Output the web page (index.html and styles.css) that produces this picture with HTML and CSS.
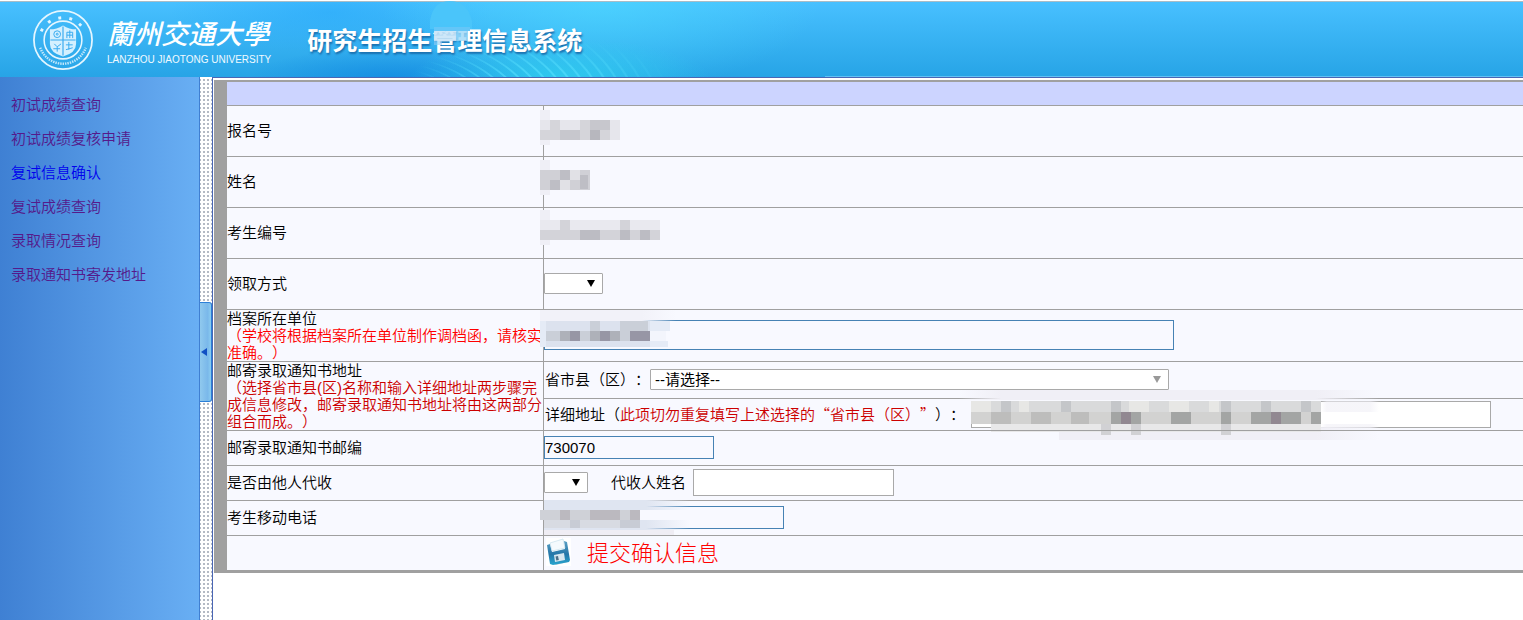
FILE: index.html
```html
<!DOCTYPE html>
<html lang="zh-CN">
<head>
<meta charset="utf-8">
<title>研究生招生管理信息系统</title>
<link rel="stylesheet" href="styles.css">
</head>
<body>
<header class="banner">
  <div class="banner-art">
    <div class="rings"></div>
    <svg class="emblem" viewBox="0 0 64 64" aria-hidden="true">
      <g fill="none" stroke="#e4f6ff">
        <circle cx="32" cy="32" r="30" stroke-width="1.8"/>
        <circle cx="32" cy="32" r="19.5" stroke-width="1.6"/>
        <path d="M9.500 23a25 25 0 0 1 45 0" stroke-width="3" stroke-dasharray="3 8.5"/>
        <path d="M8.500 40a25 25 0 0 0 47 0" stroke-width="2.500" stroke-dasharray="1.500 1" opacity=".8"/>
      </g>
      <path d="M18.500 21q7 0 13.500-4q6.500 4 13.500 4v15q0 9-13.500 13q-13.500-4-13.500-13z" fill="#d4f0ff"/>
      <g stroke="#37aaf0" fill="none">
        <path d="M32 18v30M19 32h26" stroke-width="1.200"/>
        <circle cx="26" cy="26" r="3.500"/>
        <circle cx="26" cy="26" r="1"/>
        <path d="M36 30v-6h6v6M36 27h6M39 22v8"/>
        <path d="M23 36l3 3 4-3M26 39v5M22 41h7"/>
        <path d="M35 37h7M38 34v8M35 42l7-2"/>
      </g>
    </svg>
    <div class="school">
      <span class="school-cn">蘭州交通大學</span>
      <span class="school-en">LANZHOU JIAOTONG UNIVERSITY</span>
    </div>
    <h1 class="system">研究生招生<span class="veiled">管<svg viewBox="0 0 44 44" aria-hidden="true">
      <path d="M2 20q3-20 20-20t22 20v8H2z" fill="#4bc5fa" opacity=".9"/>
      <path d="M6 26h36v4H6z" fill="#64c6f8"/>
      <path d="M6 30h22v10H6z" fill="#c9e4f7" opacity=".9"/>
      <path d="M6 40h8v4H6z" fill="#8fcdf5" opacity=".6"/>
      <path d="M28 30h12v10H28z" fill="#9bd7f7" opacity=".8"/>
    </svg></span>理信息系统</h1>
  </div>
  <div class="banner-fill"></div>
</header>

<div class="frame">
  <nav class="menu">
    <a href="#">初试成绩查询</a>
    <a href="#">初试成绩复核申请</a>
    <a href="#" class="current">复试信息确认</a>
    <a href="#">复试成绩查询</a>
    <a href="#">录取情况查询</a>
    <a href="#">录取通知书寄发地址</a>
  </nav>
  <div class="splitter">
    <button type="button" class="handle" aria-label="收起菜单"></button>
  </div>
  <main class="content">
    <form class="panel">
      <table class="sheet">
        <colgroup><col class="col-label"><col></colgroup>
        <tbody>
        <tr><th colspan="2" class="caption"></th></tr>
        <tr class="tall">
          <td>报名号</td>
          <td><svg class="mosaic mosaic-a" viewBox="0 0 80 40" aria-hidden="true">
            <path fill="#efeff6" d="M0 5h10v35H0z"/>
            <path fill="#d5d5da" d="M0 15h70v20H0z"/>
            <path fill="#e6e6ec" d="M0 15h10v10H0zM20 15h20v10H20zM70 15h10v20H70z"/>
            <path fill="#c7c7cd" d="M50 15h10v20H50zM20 25h20v10H20zM60 15h10v10H60z"/>
            <path fill="#b7b7be" d="M50 25h10v10H50z"/>
          </svg></td>
        </tr>
        <tr class="tall">
          <td>姓名</td>
          <td><svg class="mosaic mosaic-b" viewBox="0 0 50 40" aria-hidden="true">
            <path fill="#efeff6" d="M0 5h10v35H0z"/>
            <path fill="#d0d0d6" d="M0 15h50v20H0z"/>
            <path fill="#bebec5" d="M20 15h10v10H20zM10 25h10v10H10zM40 20h8v14h-8z"/>
            <path fill="#e1e1e6" d="M30 15h10v10H30zM20 25h10v10H20z"/>
          </svg></td>
        </tr>
        <tr class="tall">
          <td>考生编号</td>
          <td><svg class="mosaic mosaic-c" viewBox="0 0 120 40" aria-hidden="true">
            <path fill="#efeff6" d="M0 5h10v35H0z"/>
            <path fill="#e9e9ef" d="M0 15h120v10H0z"/>
            <path fill="#d3d3d9" d="M0 25h120v10H0zM20 15h10v10H20zM80 15h10v10H80z"/>
            <path fill="#bcbcc3" d="M40 25h20v10H40zM80 25h10v10H80zM100 25h10v10h-10z"/>
          </svg></td>
        </tr>
        <tr class="tall">
          <td><label for="pickup">领取方式</label></td>
          <td><div class="line"><span class="drop"><select id="pickup" class="w-pickup"><option></option></select></span></div></td>
        </tr>
        <tr>
          <td><label for="archive">档案所在单位<br><span class="warn">（学校将根据档案所在单位制作调档函，请核实准确。）</span></label></td>
          <td><div class="line"><input id="archive" class="edit w-archive" type="text"></div>
          <svg class="mosaic mosaic-d" viewBox="0 0 136 40" aria-hidden="true">
            <defs><linearGradient id="fade"><stop offset=".75" stop-color="#f2f2f9"/><stop offset="1" stop-color="#f2f2f9" stop-opacity="0"/></linearGradient></defs>
            <path fill="url(#fade)" d="M0 1h136v11H0z"/>
            <path fill="#dce2ee" d="M4 12h106v10H4zM4 30h106v8H4z"/>
            <path fill="#cacfd8" d="M4 22h106v10H4zM50 12h10v10H50zM80 12h28v10H80z"/>
            <path fill="#aeb1b9" d="M20 22h20v10H20zM50 22h10v10H50zM70 22h10v10H70z"/>
            <path fill="#9796a5" d="M30 22h10v10H30zM60 22h10v10H60zM90 22h20v10H90z"/>
            <path fill="#e5ebf6" d="M0 12h6v26H0zM110 12h20v10h-20zM110 32h18v6h-18z"/>
            <path fill="#f3f5fc" d="M110 22h16v10h-16z"/>
          </svg></td>
        </tr>
        <tr class="province">
          <td rowspan="2">邮寄录取通知书地址<br><span class="note">（选择省市县(区)名称和输入详细地址两步骤完成信息修改，邮寄录取通知书地址将由这两部分组合而成。）</span></td>
          <td><div class="line indent"><label for="region">省市县（区）：</label><span class="drop muted"><select id="region" class="w-region"><option>--请选择--</option></select></span></div></td>
        </tr>
        <tr class="address">
          <td><div class="line indent"><label for="address" class="quoted">详细地址（<span class="note">此项切勿重复填写上述选择的“省市县（区）”</span>）：</label><span class="covered"><input id="address" class="box w-address" type="text">
          <svg class="mosaic mosaic-e" viewBox="0 0 420 50" aria-hidden="true">
            <defs><linearGradient id="haze"><stop offset="0" stop-color="#f0eff6" stop-opacity="0"/><stop offset=".1" stop-color="#f0eff6"/><stop offset=".85" stop-color="#f0eff6"/><stop offset="1" stop-color="#f0eff6" stop-opacity="0"/></linearGradient></defs>
            <path fill="url(#haze)" d="M0 0h420v10H0zM100 37h320v13H100z"/>
            <path fill="#d9dadb" d="M12 11h350v11H12z"/>
            <path fill="#e7e7e5" d="M12 11h20v11H12zM60 11h10v11H60zM170 11h20v11h-20zM210 11h20v11h-20zM250 11h10v11h-10z"/>
            <path fill="#c4c6c9" d="M42 11h10v11H42zM102 11h10v11h-10zM152 11h10v11h-10zM262 11h10v11h-10zM302 11h10v11h-10zM342 11h10v11h-10z"/>
            <path fill="#d2d2d1" d="M12 22h350v12H12z"/>
            <path fill="#bdbdbc" d="M32 22h20v12H32zM72 22h20v12H72zM112 22h18v12h-18z"/>
            <path fill="#a3a5a4" d="M152 22h30v12h-30zM212 22h20v12h-20zM262 22h10v12h-10zM292 22h50v12h-50zM352 22h10v12h-10z"/>
            <path fill="#918891" d="M162 22h10v12h-10zM312 22h10v12h-10z"/>
            <path fill="#e8e8e9" d="M32 34h330v8H32z"/>
            <path fill="#d1d1d4" d="M142 34h10v11h-10zM172 34h10v11h-10zM262 34h10v11h-10z"/>
            <path fill="url(#haze)" d="M362 11h58v11h-58zM362 34h58v4h-58z" opacity=".6"/>
          </svg></span></div></td>
        </tr>
        <tr class="short">
          <td><label for="zip">邮寄录取通知书邮编</label></td>
          <td><div class="line"><input id="zip" class="edit w-zip" type="text" value="730070"></div></td>
        </tr>
        <tr class="short">
          <td><label for="proxy">是否由他人代收</label></td>
          <td><div class="line"><span class="drop"><select id="proxy" class="w-proxy"><option></option></select></span><label for="agent" class="agent">代收人姓名</label><input id="agent" class="box w-agent" type="text"></div></td>
        </tr>
        <tr class="short">
          <td><label for="phone">考生移动电话</label></td>
          <td><div class="line"><input id="phone" class="edit w-phone" type="text"></div>
          <svg class="mosaic mosaic-f" viewBox="0 0 150 38" aria-hidden="true">
            <defs><linearGradient id="blue"><stop offset=".7" stop-color="#dfe5f1"/><stop offset="1" stop-color="#dfe5f1" stop-opacity="0"/></linearGradient></defs>
            <path fill="url(#blue)" d="M4 0h146v10H4zM4 20h146v10H4z"/>
            <path fill="#efedf4" d="M4 30h130v6H4z"/>
            <path fill="#cfd1d7" d="M0 10h100v10H0z"/>
            <path fill="#bbb9bf" d="M20 10h10v10H20zM50 10h30v10H50zM90 10h10v10H90z"/>
            <path fill="#d8dbe2" d="M4 20h96v8H4z"/>
            <path fill="#c8ccd5" d="M30 20h10v8H30zM80 20h20v8H80z"/>
          </svg></td>
        </tr>
        <tr class="short">
          <td></td>
          <td><button type="button" class="submit">
            <svg class="disk" viewBox="0 0 25 28" aria-hidden="true">
              <defs>
                <linearGradient id="shell" x1="0" y1="0" x2="0" y2="1"><stop offset="0" stop-color="#5a9fc4"/><stop offset=".55" stop-color="#2476a8"/><stop offset="1" stop-color="#27a5cf"/></linearGradient>
              </defs>
              <path fill="#fff" d="M0 0h25v28H0z"/>
              <path fill="#c9d2da" d="M6 25l17-4-1 3-12 3z"/>
              <path fill="url(#shell)" d="M1 7l3-1 2 8 13-3-1-8 3 1 3 18-1 2-16 3-3-1z"/>
              <path fill="#f5fafd" stroke="#c0dcea" stroke-width=".6" d="M4 5l13-4 2 9-13 3z"/>
              <path fill="#d7e7f0" d="M8 17l10-2 1 7-10 2z"/>
              <path fill="#4b6f88" d="M9.500 18.500l2.500-.5.800 4-2.500.5z"/>
            </svg>
            <span>提交确认信息</span></button></td>
        </tr>
        </tbody>
      </table>
    </form>
  </main>
</div>
</body>
</html>
```

FILE: styles.css
```css
* { box-sizing: border-box; }

body {
  margin: 0;
  min-height: 100vh;
  display: flex;
  flex-direction: column;
  background: #fff;
  color: #000;
  font: 15px/17px "Liberation Sans", "Noto Sans CJK SC", sans-serif;
  text-spacing-trim: space-all;
}

.banner {
  display: flex;
  height: 76px;
  margin-top: 1px;
  border-top: 1px solid #a9bcc6;
  background: linear-gradient(#48c0ff, #27a4e6);
}
.banner-art {
  position: relative;
  display: flex;
  align-items: center;
  width: 825px;
  padding-left: 32px;
  background:
    radial-gradient(ellipse 150px 40px at 560px 76px, rgba(48, 208, 240, .85), transparent),
    radial-gradient(ellipse 140px 30px at 390px 76px, rgba(14, 132, 225, .65), transparent),
    radial-gradient(ellipse 220px 90px at 600px 0, rgba(78, 220, 255, .6), transparent),
    radial-gradient(ellipse 160px 40px at 330px 10px, rgba(35, 165, 250, .5), transparent);
}
.banner-fill {
  flex: 1;
  border-bottom: 1px solid #62c2f3;
}
.rings {
  position: absolute;
  inset: 0;
  background: repeating-radial-gradient(ellipse 250px 130px at 370px 115px, transparent 0 3%, rgba(90, 225, 255, .55) 3.500% 4%, transparent 4.500%);
  -webkit-mask-image: radial-gradient(ellipse 130px 45px at 540px 80px, #000 30%, transparent);
  mask-image: radial-gradient(ellipse 130px 45px at 540px 80px, #000 30%, transparent);
}
.emblem {
  position: relative;
  width: 62px;
  height: 62px;
}
.school {
  position: relative;
  display: flex;
  flex-direction: column;
  margin-left: 13px;
  color: #fff;
  white-space: nowrap;
}
.school-cn {
  font: italic 500 27px/40px "Noto Sans CJK TC", sans-serif;
}
.school-en {
  font: 10px/14px "Liberation Sans", sans-serif;
  color: #f0faff;
}
.system {
  position: relative;
  margin: 0 0 0 36px;
  padding-bottom: 2px;
  font: bold 25px/36px "Noto Sans CJK SC", sans-serif;
  color: #fff;
  text-shadow: 1px 2px 2px #1a6fae;
  white-space: nowrap;
}
.veiled { position: relative; }
.veiled svg {
  position: absolute;
  left: -4px;
  top: -20px;
  width: 44px;
  height: 44px;
}

.frame {
  flex: 1;
  display: flex;
}
.menu {
  flex: none;
  display: flex;
  flex-direction: column;
  gap: 17px;
  width: 200px;
  padding: 19px 11px;
  border-right: 1px solid #3f7fd2;
  background: linear-gradient(90deg, #3f80d3, #69aff4);
  font-weight: 350;
}
.menu a {
  color: #551a8b;
  text-decoration: none;
}
.menu a.current { color: #00e; }

.splitter {
  flex: none;
  display: flex;
  align-items: center;
  width: 13px;
  border-right: 1px solid #4a66b4;
  background: conic-gradient(#b4bac4 25%, #fff 0) 1px 2px / 4px 4px;
}
.handle {
  display: grid;
  place-items: center start;
  width: 12px;
  height: 100px;
  margin-top: 6px;
  padding: 0 0 0 1px;
  border: 1px solid #2c80d8;
  border-left: 0;
  border-radius: 0 3px 3px 0;
  background: linear-gradient(90deg, #90c9ee, #7ab8ea 70%, #8ccdf0);
}
.handle::before {
  content: "";
  border: 4px solid transparent;
  border-left: 0;
  border-right: 6px solid #1150c4;
}

.content {
  flex: 1;
  min-width: 0;
  padding: 2px 0 0 1px;
  border-top: 1px solid #4a66b4;
}
.panel {
  border: solid #a0a0a0;
  border-width: 2px 0 3px 13px;
}
.sheet {
  width: 100%;
  border-spacing: 0;
  table-layout: fixed;
  background: #f8f9ff;
  font-weight: 350;
}
.col-label { width: 316px; }
.caption {
  height: 23px;
  padding: 0;
  background: #ccd4ff;
}
.sheet td {
  position: relative;
  height: 35px;
  padding: 0;
  border-top: 1px solid #a0a0a0;
}
.sheet td:last-child {
  padding-bottom: 1px;
  border-left: 1px solid #a0a0a0;
}
.sheet td[rowspan] { border-left: 0; }
.sheet .tall td { height: 51px; }
.sheet .tall td, .sheet .short td { padding-bottom: 2px; }
.sheet .province td { height: 37px; }
.sheet .address td { height: 32px; }
.warn { color: #f00; }
.note { color: #c00; }

.line {
  display: flex;
  align-items: center;
  white-space: nowrap;
}
.indent { padding-left: 1px; }
.quoted {
  padding-bottom: 2px;
  font-family: "Noto Sans CJK SC", sans-serif;
}

input, select {
  margin: 0;
  padding: 0;
  border: 1px solid #a9a9a9;
  border-radius: 0;
  background: #fff;
  color: #000;
  font: 15px "Liberation Sans", "Noto Sans CJK SC", sans-serif;
}
.edit {
  height: 23px;
  border-color: #4682b4;
  background: transparent;
}
.box { height: 27px; }
select {
  height: 21px;
  padding: 0 4px;
  border-radius: 1px;
  appearance: none;
}
.drop {
  position: relative;
  display: flex;
}
.drop::after {
  content: "";
  position: absolute;
  right: 8px;
  top: 7px;
  border: 4px solid transparent;
  border-top: 7px solid #000;
  border-bottom: 0;
}
.drop.muted::after { border-top-color: #999; }
.w-pickup { width: 59px; }
.w-archive { width: 630px; height: 30px; }
.w-region { width: 519px; }
.w-address { width: 520px; }
.w-zip { width: 170px; }
.w-proxy { width: 44px; }
.w-agent { width: 201px; }
.w-phone { width: 240px; }
.agent { margin: 0 7px 0 23px; }

.covered {
  position: relative;
  display: flex;
  margin-left: 6px;
}
.mosaic {
  position: absolute;
  pointer-events: none;
}
.mosaic-a { left: -4px; top: -1px; width: 80px; height: 40px; }
.mosaic-b { left: -4px; top: -2px; width: 50px; height: 40px; }
.mosaic-c { left: -4px; top: -3px; width: 120px; height: 40px; }
.mosaic-d { left: -4px; top: -1px; width: 136px; height: 40px; }
.mosaic-e { left: -12px; top: -11px; width: 420px; height: 50px; }
.mosaic-f { left: -4px; top: -1px; width: 150px; height: 38px; }

.submit {
  display: flex;
  align-items: center;
  gap: 16px;
  padding: 0 0 0 2px;
  border: 0;
  background: none;
  color: #f00;
  font: 300 22px/28px "Noto Sans CJK SC", sans-serif;
}
.submit span { padding-bottom: 2px; }
.disk {
  width: 25px;
  height: 28px;
}
```
